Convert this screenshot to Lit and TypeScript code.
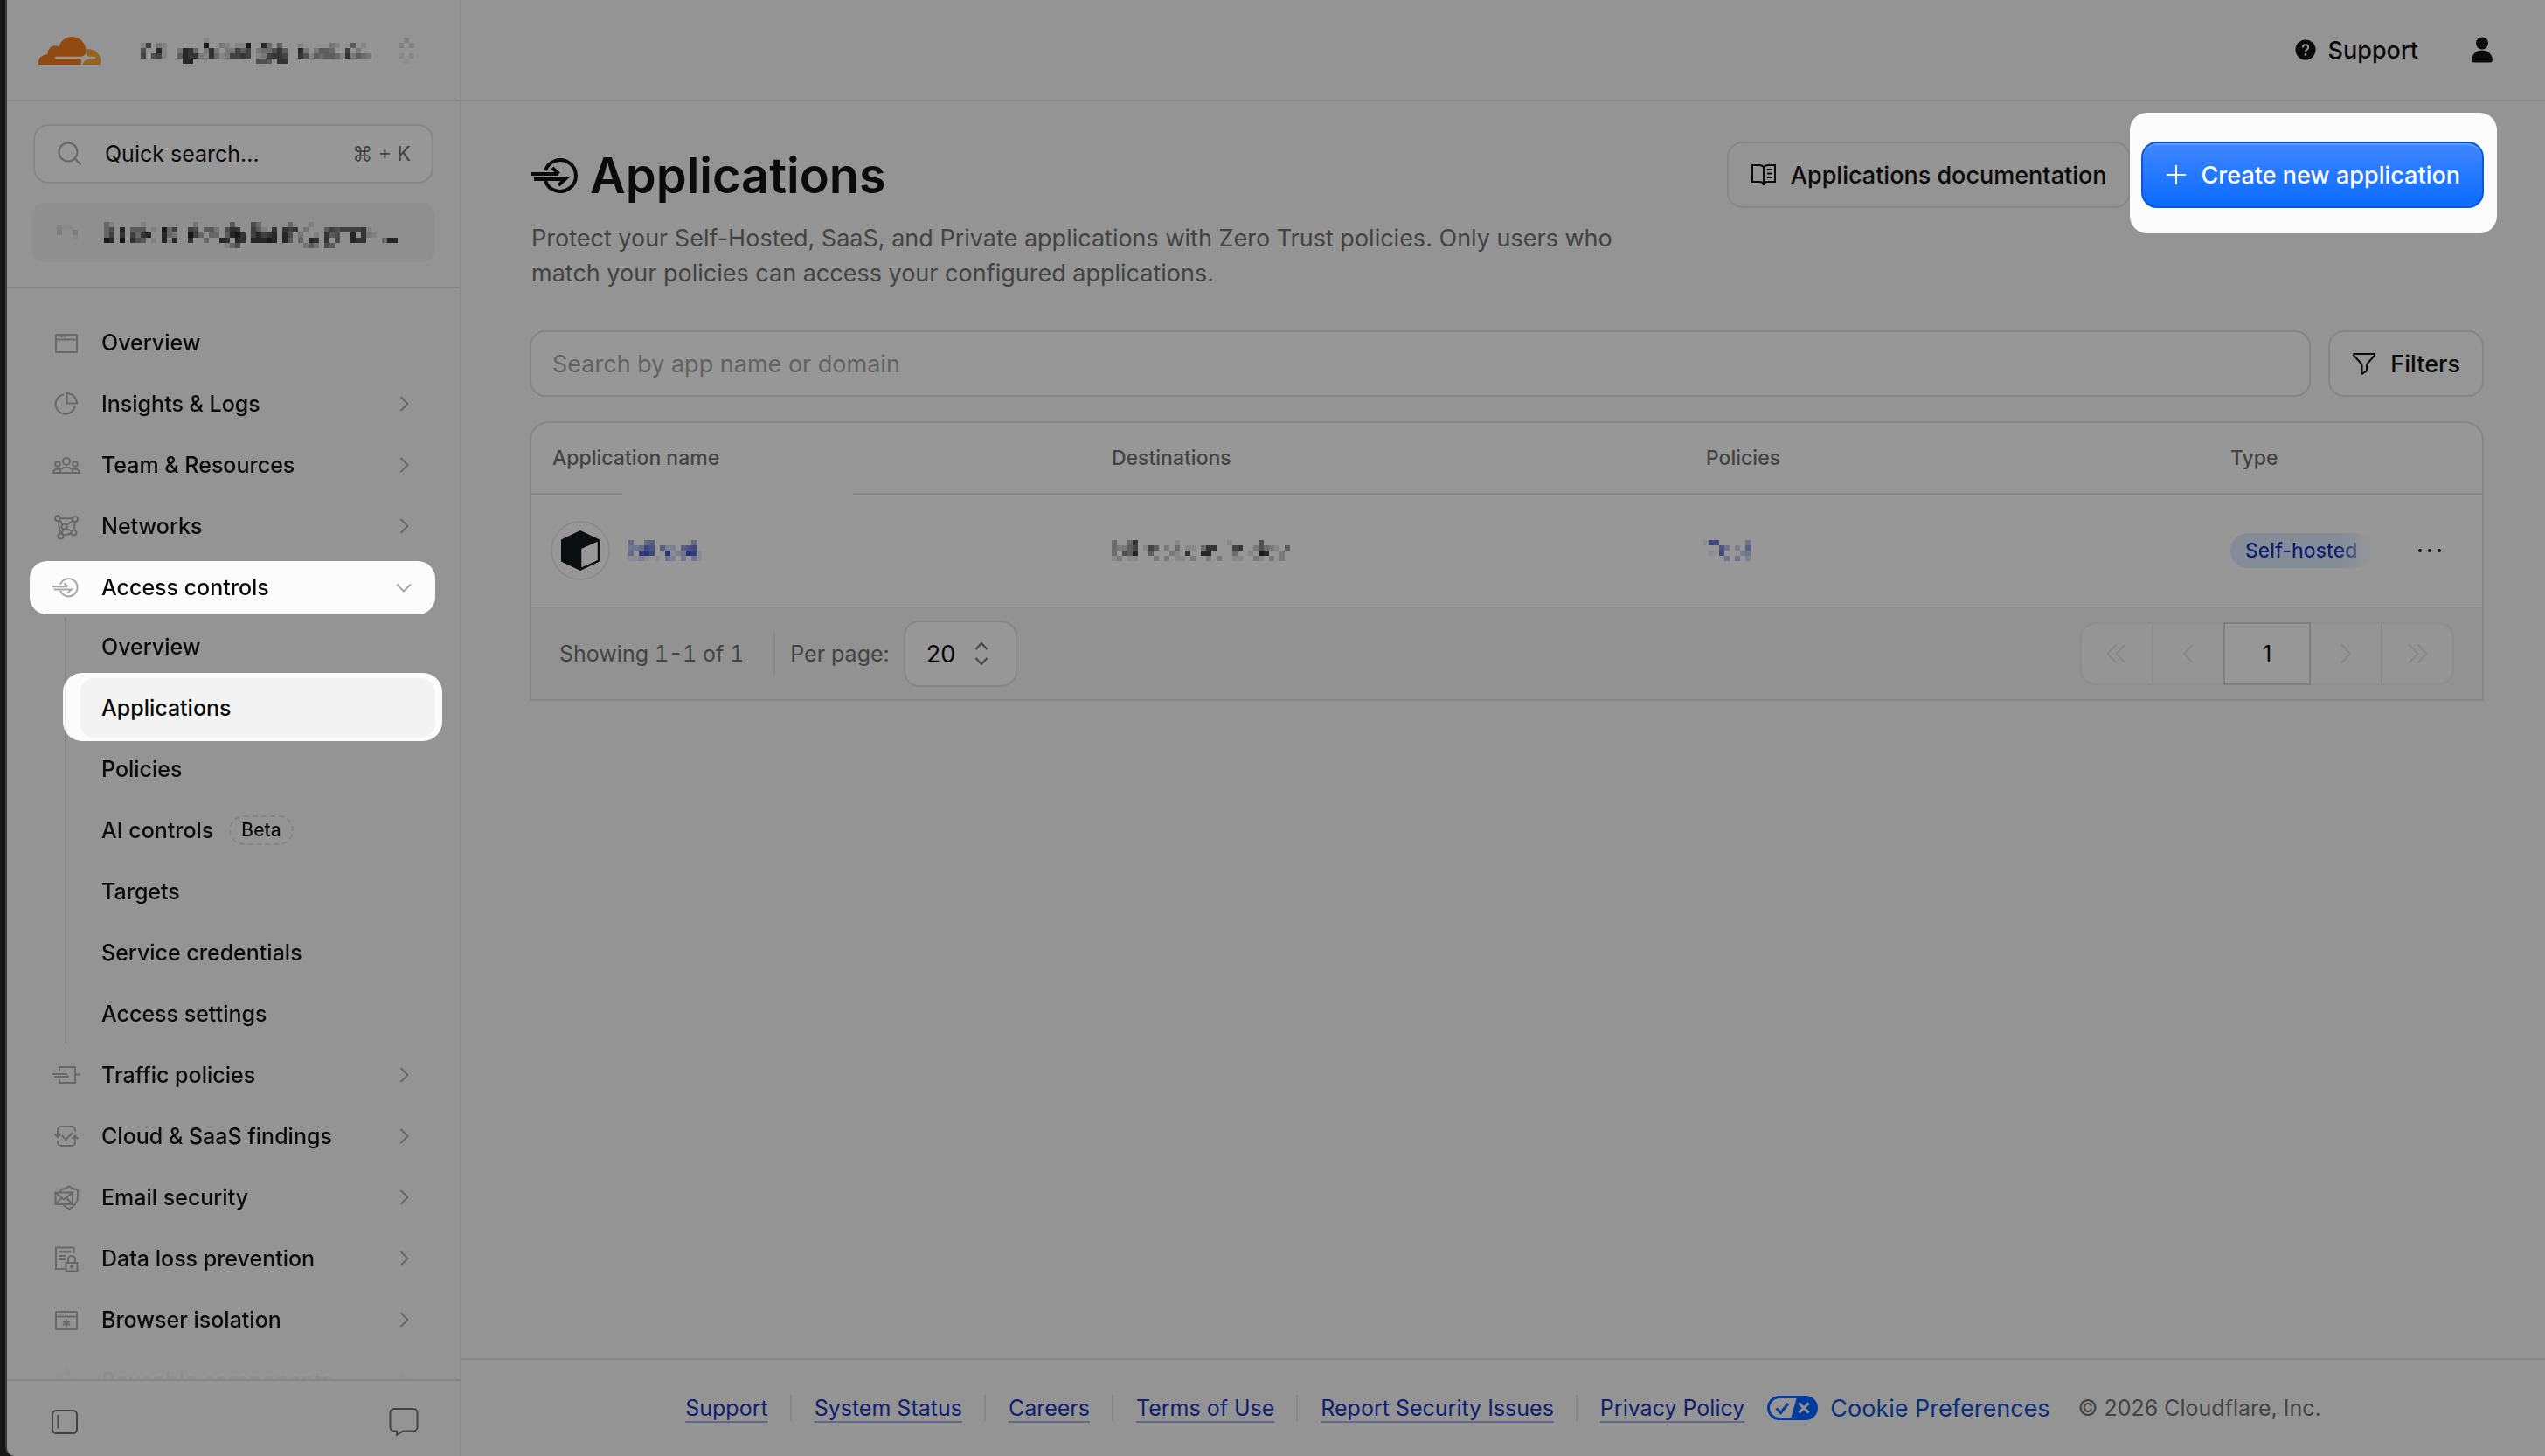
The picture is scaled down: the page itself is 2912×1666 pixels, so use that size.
import { LitElement, html, css, svg, nothing } from "lit";
import type { TemplateResult, SVGTemplateResult } from "lit";
import { customElement, property } from "lit/decorators.js";
import { classMap } from "lit/directives/class-map.js";

/* ---------- icons: drawn on a 32 unit grid ---------- */

const arrowsIntoCircle = svg`
  <path d="M16 14A18 18 0 1 1 16 26" />
  <path d="M0 18H31M24 11L31.500 18" />
  <path d="M3 24H38.500L31 31" />`;

const icons: Record<string, SVGTemplateResult> = {
  window: svg`<rect x="4" y="7" width="24" height="20" rx="0.500"/><path d="M4 12.500H28"/><path d="M7 9.800h1.500M10 9.800h1.500M13 9.800h1.500" stroke-width="1.600"/>`,
  pie: svg`<path d="M13 5.300A11.300 11.300 0 1 0 25.800 19"/><path d="M16.500 4V15.500H28A11.500 11.500 0 0 0 16.500 4Z"/>`,
  team: svg`<circle cx="16" cy="12" r="4"/><circle cx="6" cy="15" r="2.800"/><circle cx="26" cy="15" r="2.800"/>
    <path d="M8.500 25C8.500 21 12 18.800 16 18.800S23.500 21 23.500 25Z"/><path d="M9.500 20.800C5 19.500 1 21.500 1 25H8.500M22.500 20.800C27 19.500 31 21.500 31 25H23.500"/>`,
  network: svg`<circle cx="6" cy="7" r="3"/><circle cx="26" cy="8" r="3"/><circle cx="13.500" cy="16.500" r="3"/><circle cx="24.500" cy="23.500" r="3"/><circle cx="9.500" cy="27.500" r="3"/>
    <path d="M9 7.200H23M8 9.500L11.700 14M6.500 10L9 24.500M23.500 9.800L16 15M25.800 11L24.800 20.500M15.800 18.500L22 22M12.500 19.500L10.500 24.500M12.500 26.800L21.500 24.500"/>`,
  traffic: svg`<path d="M8 12V7H26V25H8V21M0 15H17M2 18H19M26 15.500H32"/>`,
  cloud: svg`<path d="M6 16V9a4 4 0 0 1 4-4H22a4 4 0 0 1 4 4v1.500M2.800 13.500L6 17l3.200-3.500M6 21v2a4 4 0 0 0 4 4h12a4 4 0 0 0 4-4V15.500M22.800 19L26 15.500l3.200 3.500M10.500 15l5 5 7.500-8"/>`,
  email: svg`<path d="M9.500 9.500V7C13 7 16.500 5.500 19 3.500C21.500 5.500 25 7 29 7.500V16C29 22 24 27 19 29.500C16.500 28 14 26.500 12.500 24.500"/><rect x="3.500" y="10.500" width="19.500" height="13.500"/><path d="M4 11l9.200 7.500L22.500 11M4 23.500l6.500-7M22.500 23.500l-6.500-7"/>`,
  dlp: svg`<path d="M24.500 10V3.500H4V28H14M7.500 8.500H21M7.500 13H15M7.500 17H15"/><rect x="15.500" y="21" width="13" height="9.500"/><path d="M18 21V17a4 4 0 0 1 8 0V21M22 24.500V27.500"/><circle cx="22" cy="25" r="1"/>`,
  isolation: svg`<rect x="4" y="7" width="24" height="20" rx="0.500"/><path d="M4 12.500H28"/><path d="M7 9.800h1.500M10 9.800h1.500M13 9.800h1.500" stroke-width="1.600"/><path d="M16 15.500V24.500M12 17.800L20 22.200M20 17.800L12 22.200"/>`,
  reuse: svg`<path d="M5 17C7 9 12 6 20 6M16 2l4 4-4 4M22 17a4.500 4.500 0 0 1 8 0"/>`,
  right: svg`<path d="M12.500 8L20.500 16L12.500 24"/>`,
  down: svg`<path d="M8 12.500L16 20.500L24 12.500"/>`,
};

const icon = (name: string, cls = "icon") =>
  name === "access"
    ? html`<svg class=${cls} viewBox="0 -9 57 57" stroke-width="3.500" aria-hidden="true">${arrowsIntoCircle}</svg>`
    : html`<svg class=${cls} viewBox="0 0 32 32" stroke-width="2" aria-hidden="true">${icons[name]}</svg>`;

/* ---------- mosaic: one digit per cell, 0 = clear, 9 = darkest ---------- */

const CELL = 6;
const mosaic = (rows: string[], cls = "mosaic", label = "Hidden name") => {
  const cols = Math.max(...rows.map((r) => r.length));
  return html`<svg class=${cls} role="img" aria-label=${label} shape-rendering="crispEdges"
    width=${cols * CELL} height=${rows.length * CELL} viewBox="0 0 ${cols * CELL} ${rows.length * CELL}">
    ${rows.map((row, y) =>
      [...row].map((c, x) =>
        c > "0"
          ? svg`<rect x=${x * CELL} y=${y * CELL} width=${CELL} height=${CELL} fill-opacity=${Number(c) / 10}/>`
          : nothing
      )
    )}
  </svg>`;
};

const ORG = [
  "00000000000010000000000000000000000000000000",
  "16021000000090021011900830400010000021004010",
  "50081002873027202264602335740082024430060200",
  "60561004877217312667601267760075143443172432",
  "00000000880000000000005540770000000000000000",
];
const ORG_CARET = ["030", "303", "000", "202", "010"];
const ACCOUNT = [
  "00000000000000000000000000000000000000000000000000000000",
  "31000001000000000200000040005300000300010000000000000000",
  "35080444010936006504420577006410707670200046566667100000",
  "36070637800832009630330489706867808502001074500807210000",
  "98090754010818007003008708708889808403087070500877000388",
  "00000000000000000000000135000000000000242054000000000000",
];
const ACCOUNT_MARK = ["2110", "3003", "0001"];
const APP_NAME = ["40045000000040", "33476052205670", "40897009123981", "11210103203031"];
const DESTINATION = [
  "3003700000001000000000100000500000",
  "3224601640203011037700067002532104",
  "3054800400021070088000030010980020",
  "1201100020201102002020011002102020",
];
const POLICY = ["177000003", "000630205", "010700023", "000030302"];

/* ---------- navigation data ---------- */

interface Item {
  label: string;
  icon: string;
  group?: boolean;
  open?: boolean;
}
const NAV: Item[] = [
  { label: "Overview", icon: "window" },
  { label: "Insights & Logs", icon: "pie", group: true },
  { label: "Team & Resources", icon: "team", group: true },
  { label: "Networks", icon: "network", group: true },
  { label: "Access controls", icon: "access", group: true, open: true },
  { label: "Traffic policies", icon: "traffic", group: true },
  { label: "Cloud & SaaS findings", icon: "cloud", group: true },
  { label: "Email security", icon: "email", group: true },
  { label: "Data loss prevention", icon: "dlp", group: true },
  { label: "Browser isolation", icon: "isolation", group: true },
  { label: "Reusable components", icon: "reuse", group: true },
];
const SUB = ["Overview", "Applications", "Policies", "AI controls", "Targets", "Service credentials", "Access settings"];
const LINKS = ["Support", "System Status", "Careers", "Terms of Use", "Report Security Issues", "Privacy Policy"];

const base = css`
  *,
  *::before,
  *::after {
    box-sizing: border-box;
  }
  :host {
    --bg: #949494;
    --surface: #979797;
    --line: #868686;
    --text: #0b0b0b;
    --muted: #434343;
    --lit: #fcfcfc;
    --link: #10206f;
    --small: 23px;
    --body: 25px;
    --large: 27px;
    font-family: Inter, "Liberation Sans", sans-serif;
    font-size: var(--body);
    color: var(--text);
  }
  button,
  input,
  select {
    font: inherit;
    color: inherit;
    margin: 0;
    background: none;
    border: 0;
    padding: 0;
  }
  a {
    color: inherit;
    text-decoration: none;
  }
  svg {
    display: block;
    flex: none;
    fill: none;
    stroke: currentColor;
  }
  .mosaic,
  .solid {
    fill: currentColor;
    stroke: none;
  }
`;

@customElement("side-bar")
export class SideBar extends LitElement {
  static styles = [
    base,
    css`
      :host {
        display: flex;
        flex-direction: column;
        min-height: 0;
        border-right: 2px solid var(--line);
      }
      .brand {
        display: flex;
        align-items: center;
        height: 116px;
        flex: none;
        padding: 2px 52px 0 36px;
        border-bottom: 2px solid var(--line);
      }
      .org {
        display: flex;
        align-items: center;
        justify-content: space-between;
        flex: 1;
        margin-left: 45px;
      }
      .caret {
        color: #555;
      }
      .top {
        display: flex;
        flex-direction: column;
        gap: 22px;
        flex: none;
        padding: 26px 28px 28px;
        border-bottom: 2px solid var(--line);
      }
      .quick {
        display: flex;
        align-items: center;
        height: 68px;
        margin: 0 2px;
        padding: 0 24px 0 26px;
        border: 2px solid var(--line);
        border-radius: 18px;
        background: var(--surface);
        text-align: left;
      }
      .quick .label {
        flex: 1;
        margin-left: 26px;
      }
      .keys {
        color: var(--muted);
        font-size: var(--small);
      }
      .glass {
        color: #666;
      }
      .account {
        display: flex;
        align-items: center;
        height: 68px;
        padding: 0 29px;
        gap: 30px;
        border-radius: 16px;
        background: #8f8f8f;
      }
      .nav {
        flex: 1;
        min-height: 0;
        overflow: hidden;
        padding: 28px 28px 0;
        display: flex;
        flex-direction: column;
        gap: 2px;
        font-weight: 500;
        mask-image: linear-gradient(#000 calc(100% - 48px), rgba(0, 0, 0, 0.05) calc(100% - 10px));
      }
      .item {
        position: relative;
        z-index: 0;
        display: flex;
        align-items: center;
        flex: none;
        height: 68px;
        width: 100%;
        padding: 0 20px 0 24px;
        text-align: left;
      }
      .item .label {
        flex: 1;
        margin-left: 24px;
      }
      .icon {
        width: 32px;
        height: 32px;
        color: #686868;
      }
      .open .icon {
        color: #a8a8a8;
      }
      .open::before {
        content: "";
        position: absolute;
        z-index: -1;
        inset: 4px 0 3px -2px;
        border-radius: 20px;
        background: var(--lit);
      }
      .sub {
        display: flex;
        flex-direction: column;
        gap: 2px;
        flex: none;
        margin: -2px 0 0 38px;
        padding-left: 16px;
        border-left: 2px solid var(--line);
      }
      .subitem {
        position: relative;
        z-index: 0;
        display: flex;
        align-items: center;
        gap: 18px;
        height: 68px;
        padding-left: 24px;
      }
      .current::before {
        content: "";
        position: absolute;
        z-index: -2;
        inset: -6px -8px -4px -20px;
        border-radius: 22px;
        background: linear-gradient(#e6e6e6, #e6e6e6) 2px 0 / 2px 100% no-repeat, var(--lit);
      }
      .current::after {
        content: "";
        position: absolute;
        z-index: -1;
        inset: 0;
        border-radius: 16px;
        background: #f3f3f3;
      }
      .beta {
        height: 34px;
        padding: 0 12px;
        border: 2px dashed var(--line);
        border-radius: 17px;
        font-size: 21px;
        line-height: 30px;
      }
      .bottom {
        display: flex;
        justify-content: space-between;
        align-items: center;
        flex: none;
        height: 88px;
        padding: 8px 47px 0 50px;
        border-top: 2px solid var(--line);
        color: #444;
      }
    `,
  ];

  private renderItem(item: Item): TemplateResult {
    const cls = classMap({ item: true, open: !!item.open });
    const body = html`${icon(item.icon)}<span class="label">${item.label}</span>${
      item.group ? icon(item.open ? "down" : "right") : nothing
    }`;
    return item.group
      ? html`<button class=${cls} aria-expanded=${item.open ? "true" : "false"}>${body}</button>${
          item.open ? this.renderSub() : nothing
        }`
      : html`<a class=${cls} href="#">${body}</a>`;
  }

  private renderSub() {
    return html`<div class="sub">
      ${SUB.map(
        (label) => html`<a class=${classMap({ subitem: true, current: label === "Applications" })} href="#">
          <span>${label}</span>${label === "AI controls" ? html`<span class="beta">Beta</span>` : nothing}
        </a>`
      )}
    </div>`;
  }

  render() {
    return html`
      <div class="brand">
        <svg class="solid" width="72" height="32" viewBox="0 0 72 32" role="img" aria-label="Cloudflare">
          <path fill="#934a11" d="M0 32C-0.500 25 3 21 10.500 20C10.500 13 17 8 23.500 11.500C26 4 31.500 0 38.500 0C46.500 0 52.500 5.500 54.500 14C55.500 18.500 53 22.800 48 22.800H20C18.500 22.800 18.500 25 20 25H45.500C48.500 25 49.500 26.500 49 29L48.500 32Z"/>
          <path fill="#976320" d="M55.500 14C65 14 72 20 71 29L70.500 32H50.600C51.500 28.500 54 26 58 25.200L64.500 25C66 24.500 66 23 64.500 22.800H59C56.500 22.500 54.800 21.500 55.200 18.500Z"/>
        </svg>
        <button class="org" aria-label="Switch organization">
          ${mosaic(ORG)} ${mosaic(ORG_CARET, "mosaic caret", "Open")}
        </button>
      </div>
      <div class="top">
        <button class="quick">
          <svg class="glass" width="28" height="28" viewBox="0 0 28 28" stroke-width="2" aria-hidden="true">
            <circle cx="12" cy="12" r="10.500" /><path d="M19.500 19.500L26.500 26.500" />
          </svg>
          <span class="label">Quick search...</span><span class="keys">⌘ + K</span>
        </button>
        <button class="account" aria-label="Switch account">
          ${mosaic(ACCOUNT_MARK, "mosaic caret", "Account")} ${mosaic(ACCOUNT)}
        </button>
      </div>
      <nav class="nav" aria-label="Main">${NAV.map((i) => this.renderItem(i))}</nav>
      <div class="bottom">
        <button aria-label="Collapse sidebar">
          <svg width="32" height="30" viewBox="0 0 32 30" stroke-width="2" aria-hidden="true">
            <rect x="2" y="2" width="28" height="26" rx="4.500" /><path d="M8.500 7V22.500" />
          </svg>
        </button>
        <button aria-label="Send feedback">
          <svg width="34" height="34" viewBox="0 0 34 34" stroke-width="2" stroke-linejoin="round" aria-hidden="true">
            <path d="M6 2H28a4.500 4.500 0 0 1 4.500 4.500V23A4.500 4.500 0 0 1 28 27.500H16L9 32V27.500H6A4.500 4.500 0 0 1 1.500 23V6.500A4.500 4.500 0 0 1 6 2Z" />
          </svg>
        </button>
      </div>
    `;
  }
}

@customElement("apps-table")
export class AppsTable extends LitElement {
  static styles = [
    base,
    css`
      :host {
        display: block;
        border: 2px solid var(--line);
        border-radius: 22px 22px 0 0;
        background: var(--surface);
      }
      .table {
        width: 100%;
        table-layout: fixed;
        border-collapse: collapse;
      }
      .c1 {
        width: 640px;
      }
      .c2 {
        width: 680px;
      }
      .c4 {
        width: 188px;
      }
      .c5 {
        width: 124px;
      }
      .table th {
        height: 81px;
        padding: 0 0 0 24px;
        border-bottom: 2px solid var(--line);
        color: var(--muted);
        font-size: var(--small);
        font-weight: 500;
        text-align: left;
      }
      .table td {
        height: 130px;
        padding: 0 0 0 24px;
        border-bottom: 2px solid var(--line);
      }
      .name {
        position: relative;
        display: flex;
        align-items: center;
        gap: 21px;
        margin-left: -2px;
        color: #1a2878;
      }
      /* blank strip that interrupts the rule above the name */
      .name::before {
        content: "";
        position: absolute;
        left: 82px;
        top: -33px;
        width: 264px;
        height: 8px;
        background: var(--surface);
      }
      .avatar {
        display: grid;
        place-items: center;
        width: 68px;
        height: 68px;
        border: 2px solid #8c8c8c;
        border-radius: 50%;
      }
      .policy {
        display: block;
        margin-left: -3px;
        color: #1c2775;
      }
      .type {
        display: block;
        mask-image: linear-gradient(90deg, #000 calc(100% - 40px), transparent);
      }
      .badge {
        display: inline-block;
        height: 40px;
        padding: 0 17px;
        border-radius: 20px;
        background: #848c98;
        color: #0f1f72;
        font-size: var(--small);
        font-weight: 500;
        line-height: 40px;
        vertical-align: top;
        white-space: nowrap;
      }
      .more {
        display: block;
        margin-left: 26px;
      }
      .foot {
        display: flex;
        align-items: center;
        height: 104px;
        padding: 0 32px;
        background: #929292;
        color: var(--muted);
      }
      .count {
        font-variant-numeric: tabular-nums;
      }
      .rule {
        width: 2px;
        height: 48px;
        margin: 0 17px 0 34px;
        background: #888;
      }
      .pick {
        position: relative;
        display: flex;
        align-items: center;
        gap: 16px;
      }
      .size {
        appearance: none;
        width: 130px;
        height: 76px;
        padding: 0 24px;
        border: 2px solid var(--line);
        border-radius: 18px;
        background: var(--surface);
        color: #050505;
        font-size: var(--large);
      }
      .updown {
        position: absolute;
        right: 33px;
        pointer-events: none;
        color: #444;
      }
      .pages {
        display: flex;
        margin-left: auto;
        height: 72px;
        border: 2px solid #8d8d8d;
        border-radius: 18px;
        background: #959595;
        font-size: var(--large);
      }
      .page {
        display: grid;
        place-items: center;
        width: 80px;
        color: #878787;
      }
      .page + .page {
        border-left: 2px solid #8a8a8a;
        width: 82px;
      }
      .pages .here {
        width: 100px;
        margin: -2px 0;
        border: 2px solid #808080;
        color: var(--text);
        background: var(--surface);
      }
      .here + .page {
        border-left: 0;
        width: 80px;
      }
    `,
  ];

  render() {
    const arrow = (d: string) =>
      html`<svg width="24" height="24" viewBox="0 0 24 24" stroke-width="2" aria-hidden="true"><path d=${d} /></svg>`;
    return html`
      <table class="table">
        <colgroup>
          <col class="c1" /><col class="c2" /><col /><col class="c4" /><col class="c5" />
        </colgroup>
        <thead>
          <tr>
            <th scope="col">Application name</th>
            <th scope="col">Destinations</th>
            <th scope="col">Policies</th>
            <th scope="col">Type</th>
            <th aria-label="Actions"></th>
          </tr>
        </thead>
        <tbody>
          <tr>
            <td>
              <div class="name">
                <span class="avatar">
                  <svg class="solid" width="44" height="46" viewBox="0 0 44 46" aria-hidden="true">
                    <path fill="#0b0e0e" fill-rule="evenodd" d="M22 0L44 10.500V35.500L22 46L0 35.500V10.500ZM23.500 21V42L41.500 34V13Z" />
                    <path fill="#989898" d="M23.500 21L41.500 13V34L23.500 42Z" />
                  </svg>
                </span>
                <a href="#">${mosaic(APP_NAME)}</a>
              </div>
            </td>
            <td>${mosaic(DESTINATION, "mosaic", "Hidden domain")}</td>
            <td><a class="policy" href="#">${mosaic(POLICY)}</a></td>
            <td><span class="type"><span class="badge">Self-hosted</span></span></td>
            <td>
              <button class="more" aria-label="More actions">
                <svg class="solid" width="28" height="8" viewBox="0 0 28 8" aria-hidden="true">
                  <circle cx="3" cy="4" r="2" /><circle cx="14" cy="4" r="2" /><circle cx="25" cy="4" r="2" />
                </svg>
              </button>
            </td>
          </tr>
        </tbody>
      </table>
      <div class="foot">
        <span class="count">Showing 1-1 of 1</span>
        <span class="rule"></span>
        <div class="pick">
          <label for="size">Per page:</label>
          <select class="size" id="size"><option>20</option></select>
          <svg class="updown" width="16" height="28" viewBox="0 0 16 28" stroke-width="2" aria-hidden="true">
            <path d="M1.500 9L8 2L14.500 9M1.500 19L8 26L14.500 19" />
          </svg>
        </div>
        <nav class="pages" aria-label="Pagination">
          <button class="page" aria-label="First page">${arrow("M11.500 1.500L1.500 12L11.500 22.500M21.500 1.500L11.500 12L21.500 22.500")}</button>
          <button class="page" aria-label="Previous page">${arrow("M17 1.500L7 12L17 22.500")}</button>
          <button class="page here" aria-current="page">1</button>
          <button class="page" aria-label="Next page">${arrow("M7 1.500L17 12L7 22.500")}</button>
          <button class="page" aria-label="Last page">${arrow("M2.500 1.500L12.500 12L2.500 22.500M12.500 1.500L22.500 12L12.500 22.500")}</button>
        </nav>
      </div>
    `;
  }
}

@customElement("app-root")
export class AppRoot extends LitElement {
  @property() heading = "Applications";

  static styles = [
    base,
    css`
      :host {
        display: block;
        background: #171717;
      }
      .shell {
        display: grid;
        grid-template-columns: 522px minmax(0, 1fr);
        height: 100vh;
        margin-left: 6px;
        border-left: 2px solid #3a3a3a;
        border-bottom-left-radius: 10px;
        background: var(--bg);
        overflow: hidden;
      }
      .shell side-bar {
        width: 520px;
      }
      .main {
        display: flex;
        flex-direction: column;
        min-width: 0;
        margin-left: -2px;
      }
      .bar {
        display: flex;
        align-items: center;
        justify-content: flex-end;
        gap: 60px;
        height: 116px;
        flex: none;
        padding-right: 59px;
        border-bottom: 2px solid var(--line);
      }
      .support {
        display: flex;
        align-items: center;
        gap: 14px;
        font-size: var(--large);
        font-weight: 500;
      }
      .content {
        flex: 1;
        padding: 46px 70px 0 78px;
      }
      .head {
        display: flex;
        justify-content: space-between;
        align-items: flex-start;
      }
      .title {
        display: flex;
        align-items: center;
        gap: 14px;
        height: 78px;
        margin: 0 0 0 2px;
        font-size: 56px;
        font-weight: 600;
      }
      .lede {
        max-width: 1300px;
        margin: 13px 0 0 2px;
        color: var(--muted);
        font-size: var(--large);
        line-height: 40px;
      }
      .actions {
        display: flex;
        gap: 12px;
      }
      .btn {
        display: flex;
        align-items: center;
        gap: 16px;
        height: 76px;
        padding: 0 25px;
        border: 2px solid var(--line);
        border-radius: 18px;
        font-size: var(--large);
        font-weight: 500;
        white-space: nowrap;
      }
      .surface {
        background: #969696;
      }
      .spot {
        position: relative;
        z-index: 0;
      }
      .spot::before {
        content: "";
        position: absolute;
        z-index: -1;
        inset: -33px -15px -29px -13px;
        border-radius: 20px;
        background: var(--lit);
      }
      .primary {
        border-color: #0a58d8;
        background: linear-gradient(#3f86ff, #0b6bff);
        box-shadow: inset 0 2px 0 #5e9aff;
        color: #fff;
      }
      .tools {
        display: flex;
        gap: 20px;
        margin: 45px 0 28px;
      }
      .find {
        flex: 1;
        min-width: 0;
        height: 76px;
        padding: 0 24px;
        border: 2px solid var(--line);
        border-radius: 18px;
        background: var(--surface);
        font-size: var(--large);
      }
      .find::placeholder {
        color: #626262;
        opacity: 1;
      }
      .footer {
        display: flex;
        align-items: center;
        justify-content: center;
        flex: none;
        height: 112px;
        border-top: 2px solid var(--line);
      }
      .link {
        color: var(--link);
        text-decoration: underline 2px #62688a;
        text-underline-offset: 6px;
      }
      .item {
        display: flex;
        align-items: center;
      }
      .item + .item::before {
        content: "";
        width: 2px;
        height: 30px;
        margin: 0 26px 0 25px;
        background: var(--line);
      }
      .cookies {
        display: flex;
        align-items: center;
        gap: 14px;
        margin: 0 32px 0 26px;
        color: #0a2f7c;
        font-size: var(--large);
      }
      .copy {
        color: var(--muted);
      }
    `,
  ];

  render() {
    return html`
      <div class="shell">
        <side-bar></side-bar>
        <main class="main">
          <header class="bar">
            <a class="support" href="#">
              <svg width="24" height="24" viewBox="0 0 24 24" aria-hidden="true">
                <circle cx="12" cy="12" r="11.500" fill="#0b0b0b" stroke="none" />
                <path d="M8.800 9.500C8.800 5.200 15.200 5.500 15.200 9.200C15.200 11.600 12 11.600 12 14" stroke="#949494" stroke-width="2" />
                <circle cx="12" cy="17.500" r="1.400" fill="#949494" stroke="none" />
              </svg>
              Support
            </a>
            <button aria-label="Profile">
              <svg class="solid" width="26" height="30" viewBox="0 0 26 30" aria-hidden="true">
                <circle cx="13" cy="7.500" r="7" />
                <path d="M13 15.500C19 15.500 25 20 25 26.500C25 28.500 24 29.500 22 29.500H4C2 29.500 1 28.500 1 26.500C1 20 7 15.500 13 15.500Z" />
              </svg>
            </button>
          </header>
          <section class="content">
            <div class="head">
              <div>
                <h1 class="title">
                  <svg width="53" height="40" viewBox="0 0 53 40" stroke-width="4" aria-hidden="true">${arrowsIntoCircle}</svg>
                  ${this.heading}
                </h1>
                <p class="lede">
                  Protect your Self-Hosted, SaaS, and Private applications with Zero Trust policies. Only users who<br />
                  match your policies can access your configured applications.
                </p>
              </div>
              <div class="actions">
                <a class="btn" href="#">
                  <svg width="30" height="26" viewBox="0 0 30 26" stroke-width="2" aria-hidden="true">
                    <path d="M15 4C13.500 2.500 12 2 10 2H2V21H10C12.500 21 15 22 15 25C15 22 17.500 21 20 21H28V2H20C18 2 16.500 2.500 15 4V24M19 7H25M19 11.500H25M19 16H25" />
                  </svg>
                  Applications documentation
                </a>
                <div class="spot">
                  <button class="btn primary">
                    <svg width="26" height="26" viewBox="0 0 26 26" stroke-width="2" aria-hidden="true">
                      <path d="M13 2V24M2 13H24" />
                    </svg>
                    Create new application
                  </button>
                </div>
              </div>
            </div>
            <div class="tools">
              <input class="find" type="search" aria-label="Search by app name or domain" placeholder="Search by app name or domain" />
              <button class="btn surface">
                <svg width="28" height="26" viewBox="0 0 28 26" stroke-width="2" stroke-linejoin="round" aria-hidden="true">
                  <path d="M2 2H26V3.500L17 14V21.500L11.500 24.800V14L2 3.500Z" />
                </svg>
                Filters
              </button>
            </div>
            <apps-table></apps-table>
          </section>
          <footer class="footer">
            ${LINKS.map((l) => html`<span class="item"><a class="link" href="#">${l}</a></span>`)}
            <button class="cookies">
              <svg width="58" height="28" viewBox="0 0 58 28" aria-hidden="true">
                <rect x="1.500" y="1.500" width="55" height="25" rx="12.500" stroke="#003b9e" stroke-width="3" />
                <path d="M34 1.500H44A12.500 12.500 0 0 1 44 26.500H27Z" fill="#003b9e" stroke="none" />
                <path d="M10.500 14.500L15.500 19.500L24 9" stroke="#003b9e" stroke-width="3" />
                <path d="M36.500 8.500L47.500 19.500M47.500 8.500L36.500 19.500" stroke="#949494" stroke-width="3" />
              </svg>
              Cookie Preferences
            </button>
            <span class="copy">© 2026 Cloudflare, Inc.</span>
          </footer>
        </main>
      </div>
    `;
  }
}
